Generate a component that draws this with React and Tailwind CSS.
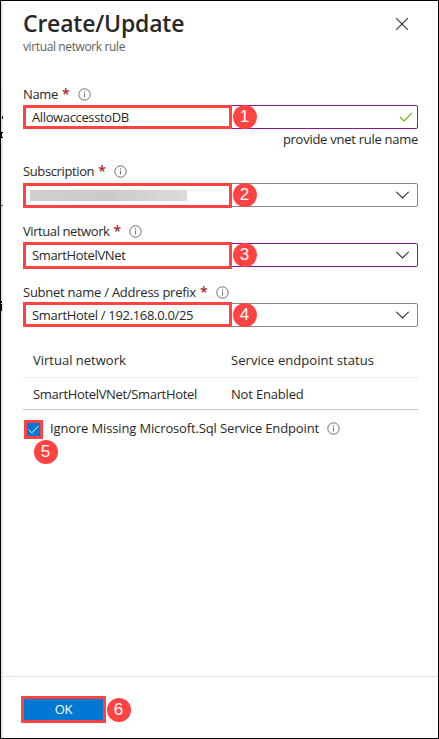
import React from "react";

function Info({ className = "" }) {
  return (
    <svg className={"h-[13px] w-[13px] shrink-0 " + className} viewBox="0 0 13 13" fill="none">
      <circle cx="6.5" cy="6.5" r="5.7" stroke="#6e6e6e" />
      <path d="M6.5 5.5v4" stroke="#7a7a7a" strokeWidth="1.1" />
      <path d="M6.5 3.2v1.3" stroke="#7a7a7a" strokeWidth="1.1" />
    </svg>
  );
}

function Label({ children, className }) {
  return (
    <div className="flex h-5 items-center whitespace-nowrap">
      <span className={className}>{children}</span>
      <span className="ml-1 w-[6px] text-[14px] leading-5 font-semibold text-[#a4262c]">*</span>
      <Info className="ml-[10px]" />
    </div>
  );
}

function Badge({ n, className }) {
  return (
    <div className={"absolute flex h-6 w-6 items-center justify-center rounded-full bg-[#ff4343] font-['Liberation_Sans',sans-serif] text-[17px] leading-6 tracking-normal text-white " + className}>
      {n}
    </div>
  );
}

function Field({ n, border, mark, children }) {
  return (
    <div className={"relative flex h-6 w-[395px] items-center justify-between rounded-[2px] border pl-2 " + border}>
      <div className="flex items-center whitespace-nowrap">{children}</div>
      <div className={"absolute -left-px w-[209px] border-[3px] border-[#ff4343] " + mark} />
      <Badge n={n} className="-top-px left-[208.5px]" />
      {n === 1 ? (
        <svg className="mr-[5px] h-3 w-3" viewBox="0 0 12 12" fill="none">
          <path d="M0 6l4 4 8-8" stroke="#6bb700" strokeWidth="1.2" />
        </svg>
      ) : (
        <svg className="mr-2 h-2 w-[13px]" viewBox="0 0 13 8" fill="none">
          <path d="M0.3 0.8l6.2 6.2 6.2-6.2" stroke="#323130" strokeWidth="1.1" />
        </svg>
      )}
    </div>
  );
}

export default function App() {
  return (
    <div className="flex h-[739px] w-[439px] overflow-hidden border border-black bg-white font-['Open_Sans','Noto_Sans',sans-serif] text-[13px] leading-5 text-[#292827]">
      <div className="flex w-[2px] shrink-0 flex-col bg-[#e9e5e5]">
        <div className="flex h-[67px] flex-col bg-[#dfe1ee] mt-[91px]">
          <div className="mt-6 ml-px h-[3px] w-px bg-black" />
          <div className="mt-[13px] h-[6px] w-[2px] border-y border-l border-black" />
        </div>
        <div className="mt-[46px] h-px bg-[#1565a8]" />
        <div className="mt-[95px] h-[2px] w-px bg-black" />
        <div className="mt-px h-[7px] w-px bg-black" />
      </div>
      <div className="flex min-w-0 flex-1 flex-col">
        <header className="flex h-[53px] justify-between pl-5">
          <div>
            <h1 className="mt-2 text-[23px] leading-7 font-semibold tracking-[-0.2px] whitespace-nowrap">Create/Update</h1>
            <p className="mt-[2px] text-[12px] leading-4 tracking-[-0.38px] text-[#605e5c]">virtual network rule</p>
          </div>
          <svg className="mt-[17px] mr-[30px] h-3 w-3" viewBox="0 0 12 12" fill="none">
            <path d="M0 0l12 12M12 0L0 12" stroke="#323130" strokeWidth="1.1" />
          </svg>
        </header>
        <main className="flex flex-1 flex-col pl-5">
          <div className="mt-[30px]">
            <Label className="tracking-[-0.35px]">Name</Label>
          </div>
          <div className="mt-px">
            <Field n={1} border="border-[#881798]" mark="-top-px h-6">
              <span className="tracking-[-0.37px]">AllowaccesstoDB</span>
            </Field>
          </div>
          <p className="h-5 w-[395px] text-right tracking-[-0.27px]">provide vnet rule name</p>
          <div className="mt-3">
            <Label className="tracking-[-0.38px]">Subscription</Label>
          </div>
          <div className="mt-[2px]">
            <Field n={2} border="border-[#8a8886]" mark="-top-px h-[25px]">
              <div className="-ml-[2px] h-[11px] w-[157px] bg-linear-to-r from-[#cfcfcf] via-[#cbcbcb] to-[#dcdcdc]" />
            </Field>
          </div>
          <div className="mt-[14px]">
            <Label className="tracking-[-0.42px]">Virtual network</Label>
          </div>
          <div className="mt-[2px]">
            <Field n={3} border="border-[#881798]" mark="-top-[2px] h-[27px]">
              <span className="tracking-[-0.35px]">SmartHotelVNet</span>
            </Field>
          </div>
          <div className="mt-[15px]">
            <Label className="tracking-[-0.25px]">Subnet name / Address prefix</Label>
          </div>
          <div className="mt-px">
            <Field n={4} border="border-[#8a8886]" mark="-top-[2px] h-[25px]">
              <span className="tracking-[-0.32px]">SmartHotel / 192.168.0.0/25</span>
            </Field>
          </div>
          <div className="mt-[17px] w-[395px] whitespace-nowrap">
            <div className="flex h-[34px] items-center border-b border-[#edebe9] pl-[10px]">
              <div className="-mt-px w-[198px]">Virtual network</div>
              <span className="-mt-px tracking-[0.06px]">Service endpoint status</span>
            </div>
            <div className="flex h-8 items-center border-b border-[#c8c6c4] pl-[10px]">
              <div className="w-[198px] tracking-[-0.33px]">SmartHotelVNet/SmartHotel</div>
              <span className="tracking-[-0.18px]">Not Enabled</span>
            </div>
          </div>
          <div className="relative mt-[10px] flex h-[19px] items-center pl-px whitespace-nowrap">
            <div className="flex h-[19px] w-[19px] items-center justify-center border-[3px] border-[#ff4343] bg-[#0078d4]">
              <svg className="h-[9px] w-[11px]" viewBox="0 0 11 9" fill="none">
                <path d="M0.5 4.5l3.3 3.3L10.5 1" stroke="white" strokeWidth="1" />
              </svg>
            </div>
            <span className="-mt-[3px] ml-[7px] tracking-[-0.14px]">Ignore Missing Microsoft.Sql Service Endpoint</span>
            <Info className="-mt-[3px] ml-[8px]" />
            <Badge n={5} className="top-5 left-[10.5px]" />
          </div>
        </main>
        <footer className="h-[62px] border-t border-[#e6dcdc] pt-[19px] pl-[18px]">
          <div className="relative flex h-[27px] w-[85px] items-center justify-center border-[3px] border-[#ff4343] bg-[#0078d4] text-white">
            <span className="-mt-px tracking-[-0.3px]">OK</span>
            <Badge n={6} className="-top-[1px] left-[82.5px]" />
          </div>
        </footer>
      </div>
    </div>
  );
}
